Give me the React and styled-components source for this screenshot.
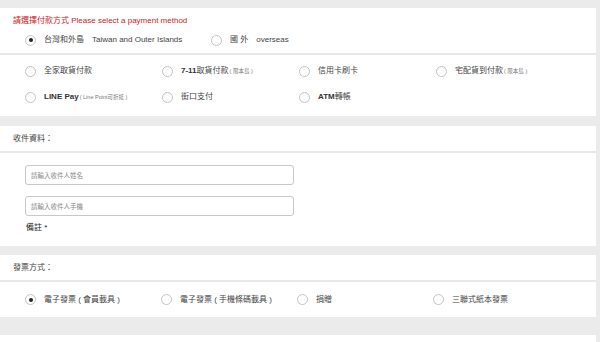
import React from "react";
import styled, { createGlobalStyle } from "styled-components";

const GlobalStyle = createGlobalStyle`
  body {
    margin: 0;
    background: #ebebeb;
    font-family: "Liberation Sans", Arial, "Noto Sans CJK TC", sans-serif;
    color: #333;
  }
`;

const payOptions = [
  { label: "全家取貨付款" },
  { label: "7-11", strong: true, rest: "取貨付款", note: "( 限本島 )" },
  { label: "信用卡刷卡" },
  { label: "宅配貨到付款", note: "( 限本島 )" },
  { label: "LINE Pay", strong: true, note: "( Line Point可折抵 )" },
  { label: "街口支付" },
  { label: "ATM", strong: true, rest: "轉帳" },
];

const invoiceOptions = [
  { label: "電子發票 ( 會員載具 )", checked: true },
  { label: "電子發票 ( 手機條碼載具 )" },
  { label: "捐贈" },
  { label: "三聯式紙本發票" },
];

export default function App() {
  return (
    <>
      <GlobalStyle />
      <Page>
        <Panel>
          <Notice>請選擇付款方式 Please select a payment method</Notice>
          <RegionRow>
            <Option>
              <Radio checked />
              <Label>台灣和外島</Label>
              <Label $en>Taiwan and Outer Islands</Label>
            </Option>
            <Option>
              <Radio />
              <Label>國 外</Label>
              <Label $en>overseas</Label>
            </Option>
          </RegionRow>
          <OptionGrid $col={137} $row={26} $pad="3px 0 6px 25px">
            {payOptions.map((o) => (
              <Option key={o.label + (o.rest || "")}>
                <Radio />
                <Label>
                  {o.strong ? <Strong>{o.label}</Strong> : o.label}
                  {o.rest}
                  {o.note && <Note>{o.note}</Note>}
                </Label>
              </Option>
            ))}
          </OptionGrid>
        </Panel>

        <Panel $gap={10}>
          <PanelHeader>收件資料：</PanelHeader>
          <FormBody>
            <Field placeholder="請輸入收件人姓名" />
            <Field placeholder="請輸入收件人手機" />
            <Remark>備註 *</Remark>
          </FormBody>
        </Panel>

        <Panel $gap={9}>
          <PanelHeader>發票方式：</PanelHeader>
          <OptionGrid $col={136} $row={35} $pad="0 0 0 25px">
            {invoiceOptions.map((o) => (
              <Option key={o.label}>
                <Radio checked={o.checked} />
                <Label>{o.label}</Label>
              </Option>
            ))}
          </OptionGrid>
        </Panel>

        <Panel $gap={18} $height={20} />
      </Page>
    </>
  );
}

const Page = styled.div`
  display: flex;
  flex-direction: column;
  padding: 8px 4px 0 0;
`;

const Panel = styled.section`
  background: #fff;
  margin-top: ${(p) => p.$gap || 0}px;
  ${(p) => p.$height && `height: ${p.$height}px;`}
`;

const Notice = styled.div`
  padding: 7px 13px 0;
  line-height: 12px;
  font-size: 8px;
  color: #d0201f;
`;

const RegionRow = styled.div`
  display: grid;
  grid-template-columns: 186px auto;
  align-items: center;
  height: 26px;
  padding-left: 25px;
  border-bottom: 2px solid #e8e8e8;
`;

const OptionGrid = styled.div`
  display: grid;
  grid-template-columns: repeat(4, ${(p) => p.$col}px);
  grid-auto-rows: ${(p) => p.$row}px;
  align-items: center;
  padding: ${(p) => p.$pad};
`;

const Option = styled.label`
  display: flex;
  align-items: center;
  white-space: nowrap;
`;

const Radio = styled.span`
  flex: none;
  width: 9px;
  height: 9px;
  border: 1px solid #c4c4c4;
  border-radius: 50%;
  margin-right: 8px;
  display: flex;
  align-items: center;
  justify-content: center;
  &::after {
    content: "";
    width: 4px;
    height: 4px;
    border-radius: 50%;
    background: ${(p) => (p.checked ? "#222" : "transparent")};
  }
`;

const Label = styled.span`
  font-size: 8px;
  line-height: 12px;
  color: #444;
  margin-right: ${(p) => (p.$en ? 0 : 8)}px;
`;

const Strong = styled.b`
  font-weight: bold;
  color: #333;
`;

const Note = styled.span`
  font-size: 5.5px;
  color: #777;
  margin-left: 1px;
`;

const PanelHeader = styled.div`
  padding: 7px 13px 6px;
  line-height: 12px;
  font-size: 8px;
  color: #444;
  border-bottom: 2px solid #e8e8e8;
`;

const FormBody = styled.div`
  display: flex;
  flex-direction: column;
  align-items: flex-start;
  gap: 11px;
  padding: 12px 0 12px 25px;
`;

const Field = styled.input`
  box-sizing: border-box;
  width: 269px;
  height: 20px;
  border: 1px solid #c8c8c8;
  border-radius: 3px;
  padding: 0 5px;
  font-family: inherit;
  font-size: 6.5px;
  outline: none;
  &::placeholder {
    color: #888;
  }
`;

const Remark = styled.div`
  margin-top: -5px;
  padding-left: 1px;
  line-height: 12px;
  font-size: 8px;
  color: #222;
`;
